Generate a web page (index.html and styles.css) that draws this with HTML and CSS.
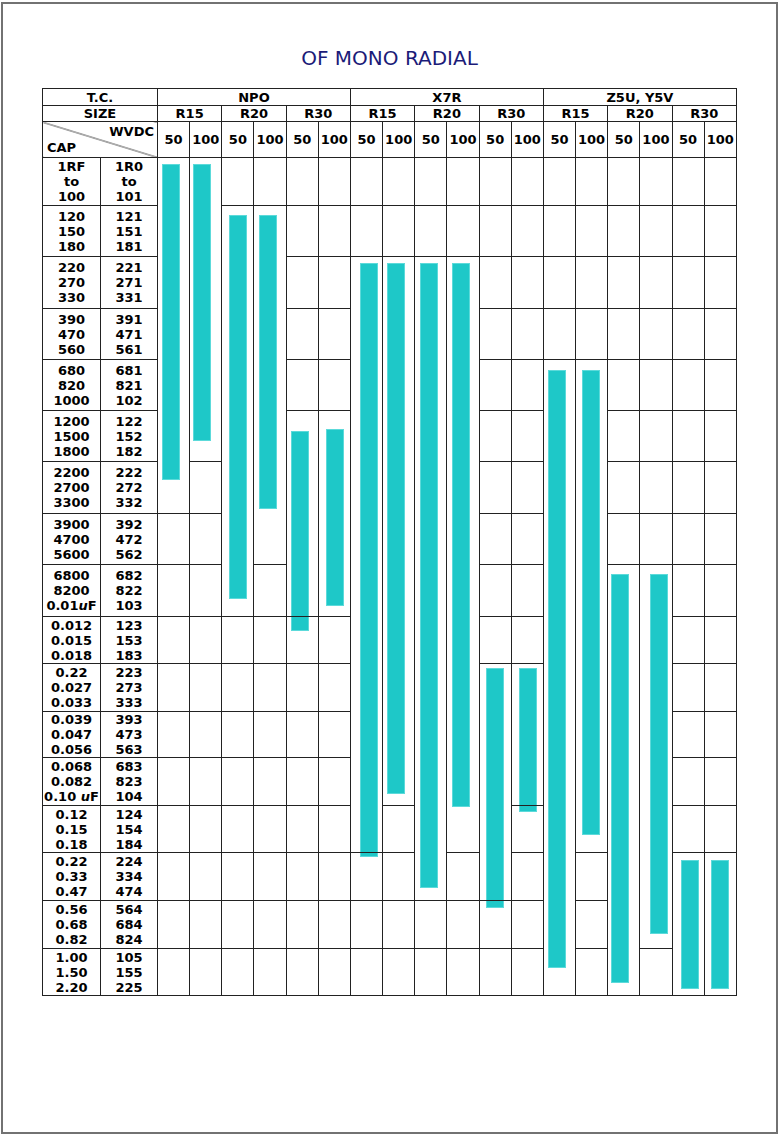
FILE: index.html
```html
<!DOCTYPE html>
<html lang="en">
<head>
<meta charset="utf-8">
<title>OF MONO RADIAL</title>
<link rel="stylesheet" href="styles.css">
</head>
<body>
<div class="page">
  <h1 class="title">OF MONO RADIAL</h1>
  <table class="chart">
    <colgroup><col class="c-cap"><col class="c-code"><col span="18"></colgroup>
    <thead>
      <tr class="h17"><th colspan="2">T.C.</th><th colspan="6">NPO</th><th colspan="6">X7R</th><th colspan="6">Z5U, Y5V</th></tr>
      <tr class="h16"><th colspan="2">SIZE</th><th colspan="2">R15</th><th colspan="2">R20</th><th colspan="2">R30</th><th colspan="2">R15</th><th colspan="2">R20</th><th colspan="2">R30</th><th colspan="2">R15</th><th colspan="2">R20</th><th colspan="2">R30</th></tr>
      <tr class="h36"><th colspan="2" class="diag"><div class="wv">WVDC</div><div class="cp">CAP</div></th><th>50</th><th>100</th><th>50</th><th>100</th><th>50</th><th>100</th><th>50</th><th>100</th><th>50</th><th>100</th><th>50</th><th>100</th><th>50</th><th>100</th><th>50</th><th>100</th><th>50</th><th>100</th></tr>
    </thead>
    <tbody>
      <tr class="r48"><td>1RF<br>to<br>100</td><td>1R0<br>to<br>101</td>
        <td rowspan="7" class="bc"><div class="slot"><div class="bar" style="margin:6px 0 0 4px;height:316px"></div></div></td>
        <td rowspan="6" class="bc"><div class="slot"><div class="bar" style="margin:6px 0 0 3px;height:277px"></div></div></td>
        <td></td><td></td><td></td><td></td><td></td><td></td><td></td><td></td><td></td><td></td><td></td><td></td><td></td><td></td><td></td><td></td></tr>
      <tr class="r51"><td>120<br>150<br>180</td><td>121<br>151<br>181</td>
        <td rowspan="8" class="bc"><div class="slot"><div class="bar" style="margin:9px 0 0 7px;height:384px"></div></div></td>
        <td rowspan="7" class="bc"><div class="slot"><div class="bar" style="margin:9px 0 0 5px;height:294px"></div></div></td>
        <td></td><td></td><td></td><td></td><td></td><td></td><td></td><td></td><td></td><td></td><td></td><td></td><td></td><td></td></tr>
      <tr class="r52"><td>220<br>270<br>330</td><td>221<br>271<br>331</td>
        <td></td><td></td>
        <td rowspan="12" class="bc"><div class="slot"><div class="bar" style="margin:6px 0 0 9px;height:594px"></div></div></td>
        <td rowspan="11" class="bc"><div class="slot"><div class="bar" style="margin:6px 0 0 4px;height:531px"></div></div></td>
        <td rowspan="13" class="bc"><div class="slot"><div class="bar" style="margin:6px 0 0 5px;height:625px"></div></div></td>
        <td rowspan="12" class="bc"><div class="slot"><div class="bar" style="margin:6px 0 0 5px;height:544px"></div></div></td>
        <td></td><td></td><td></td><td></td><td></td><td></td><td></td><td></td></tr>
      <tr class="r51"><td>390<br>470<br>560</td><td>391<br>471<br>561</td>
        <td></td><td></td><td></td><td></td><td></td><td></td><td></td><td></td><td></td><td></td></tr>
      <tr class="r51"><td>680<br>820<br>1000</td><td>681<br>821<br>102</td>
        <td></td><td></td><td></td><td></td>
        <td rowspan="13" class="bc"><div class="slot"><div class="bar" style="margin:10px 0 0 4px;height:598px"></div></div></td>
        <td rowspan="10" class="bc"><div class="slot"><div class="bar" style="margin:10px 0 0 6px;height:465px"></div></div></td>
        <td></td><td></td><td></td><td></td></tr>
      <tr class="r51"><td>1200<br>1500<br>1800</td><td>122<br>152<br>182</td>
        <td rowspan="4" class="bc"><div class="slot"><div class="bar" style="margin:20px 0 0 4px;height:200px"></div></div></td>
        <td rowspan="4" class="bc"><div class="slot"><div class="bar" style="margin:18px 0 0 7px;height:177px"></div></div></td>
        <td></td><td></td><td></td><td></td><td></td><td></td></tr>
      <tr class="r52"><td>2200<br>2700<br>3300</td><td>222<br>272<br>332</td>
        <td></td><td></td><td></td><td></td><td></td><td></td><td></td></tr>
      <tr class="r51"><td>3900<br>4700<br>5600</td><td>392<br>472<br>562</td>
        <td></td><td></td><td></td><td></td><td></td><td></td><td></td><td></td></tr>
      <tr class="r52"><td>6800<br>8200<br>0.01<i>u</i>F</td><td>682<br>822<br>103</td>
        <td></td><td></td><td></td><td></td><td></td>
        <td rowspan="9" class="bc"><div class="slot"><div class="bar" style="margin:9px 0 0 3px;height:409px"></div></div></td>
        <td rowspan="8" class="bc"><div class="slot"><div class="bar" style="margin:9px 0 0 10px;height:360px"></div></div></td>
        <td></td><td></td></tr>
      <tr class="r47"><td>0.012<br>0.015<br>0.018</td><td>123<br>153<br>183</td>
        <td></td><td></td><td></td><td></td><td></td><td></td><td></td><td></td><td></td><td></td></tr>
      <tr class="r48"><td>0.22<br>0.027<br>0.033</td><td>223<br>273<br>333</td>
        <td></td><td></td><td></td><td></td><td></td><td></td>
        <td rowspan="5" class="bc"><div class="slot"><div class="bar" style="margin:4px 0 0 6px;height:240px"></div></div></td>
        <td rowspan="3" class="bc"><div class="slot"><div class="bar" style="margin:4px 0 0 7px;height:144px"></div></div></td>
        <td></td><td></td></tr>
      <tr class="r46"><td>0.039<br>0.047<br>0.056</td><td>393<br>473<br>563</td>
        <td></td><td></td><td></td><td></td><td></td><td></td><td></td><td></td></tr>
      <tr class="r48"><td>0.068<br>0.082<br>0.10 <i>u</i>F</td><td>683<br>823<br>104</td>
        <td></td><td></td><td></td><td></td><td></td><td></td><td></td><td></td></tr>
      <tr class="r47"><td>0.12<br>0.15<br>0.18</td><td>124<br>154<br>184</td>
        <td></td><td></td><td></td><td></td><td></td><td></td><td></td><td></td><td></td><td></td></tr>
      <tr class="r48"><td>0.22<br>0.33<br>0.47</td><td>224<br>334<br>474</td>
        <td></td><td></td><td></td><td></td><td></td><td></td><td></td><td></td><td></td><td></td><td></td>
        <td rowspan="3" class="bc"><div class="slot"><div class="bar" style="margin:7px 0 0 8px;height:129px"></div></div></td>
        <td rowspan="3" class="bc"><div class="slot"><div class="bar" style="margin:7px 0 0 6px;height:129px"></div></div></td></tr>
      <tr class="r48"><td>0.56<br>0.68<br>0.82</td><td>564<br>684<br>824</td>
        <td></td><td></td><td></td><td></td><td></td><td></td><td></td><td></td><td></td><td></td><td></td><td></td><td></td></tr>
      <tr class="r47"><td>1.00<br>1.50<br>2.20</td><td>105<br>155<br>225</td>
        <td></td><td></td><td></td><td></td><td></td><td></td><td></td><td></td><td></td><td></td><td></td><td></td><td></td><td></td></tr>
    </tbody>
  </table>
</div>
</body>
</html>
```

FILE: styles.css
```css
* { box-sizing: border-box; }
html, body { margin: 0; padding: 0; background: #fff; }
body { font-family: "DejaVu Sans", Verdana, sans-serif; }

.page {
  margin: 2px 0 0 1px;
  width: 777px;
  height: 1132px;
  border: 2px solid #727272;
  display: flex;
  flex-direction: column;
  align-items: center;
}

.title {
  margin: 42px 0 18px;
  font-size: 20px;
  line-height: 24px;
  font-weight: normal;
  color: #1b1b78;
}

.chart {
  width: 695px;
  border-collapse: collapse;
  table-layout: fixed;
  font-size: 13px;
  font-weight: bold;
  line-height: 15px;
  color: #000;
}
.c-cap { width: 58px; }
.c-code { width: 57px; }

.chart th, .chart td {
  border: 1px solid #222;
  padding: 0;
  text-align: center;
  vertical-align: middle;
  font-weight: bold;
  white-space: nowrap;
}

.h17 { height: 17px; }
.h16 { height: 16px; }
.h36 { height: 36px; }
.r46 { height: 46px; }
.r47 { height: 47px; }
.r48 { height: 48px; }
.r51 { height: 51px; }
.r52 { height: 52px; }

.diag {
  background: linear-gradient(to top right, transparent calc(50% - 0.8px), #333 50%, transparent calc(50% + 0.8px));
  line-height: 16px;
}
.diag .wv { text-align: right; padding-right: 3px; }
.diag .cp { text-align: left; padding-left: 4px; }

.chart td.bc { vertical-align: top; }
.slot { display: flow-root; height: 0; }
.bar {
  width: 18px;
  background: #1ec8c8;
  border: 1px solid #5cdada;
}
```
